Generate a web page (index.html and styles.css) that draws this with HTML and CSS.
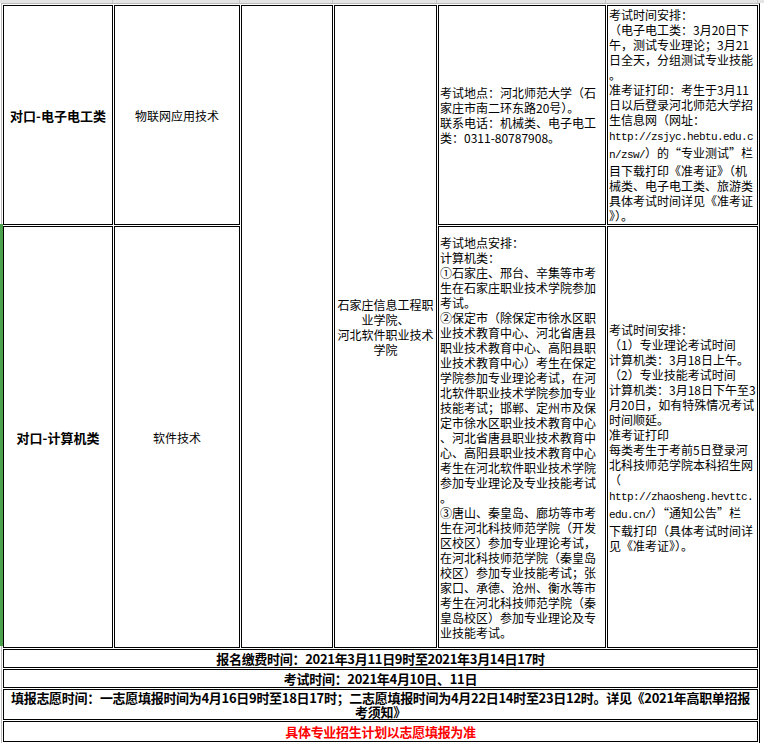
FILE: index.html
```html
<!DOCTYPE html>
<html lang="zh-CN">
<head>
<meta charset="utf-8">
<title>对口招生考试安排</title>
<link rel="stylesheet" href="styles.css">
</head>
<body>
<div class="page">
  <div class="band">
    <span class="b1"></span><span class="b2"></span><span class="b3"></span><span class="b4"></span><span class="b5"></span><span class="b6"></span>
  </div>
  <table class="sheet">
    <colgroup>
      <col class="w1"><col class="w2"><col class="w3"><col class="w4"><col class="w5"><col class="w6">
    </colgroup>
    <tr class="r1">
      <td class="cat">对口-电子电工类</td>
      <td class="major">物联网应用技术</td>
      <td rowspan="2"></td>
      <td rowspan="2" class="school">石家庄信息工程职<br>业学院、<br>河北软件职业技术<br>学院</td>
      <td class="info">考试地点：河北师范大学（石<br>家庄市南二环东路20号）。<br>联系电话：机械类、电子电工<br>类：0311-80787908。</td>
      <td class="info">考试时间安排：<br>（电子电工类：3月20日下<br>午，测试专业理论；3月21<br>日全天，分组测试专业技能<br>。<br>准考证打印：考生于3月11<br>日以后登录河北师范大学招<br>生信息网（网址：<br><span class="url">http://zsjyc.hebtu.edu.c</span><br><span class="url">n/zsw/</span>）的“专业测试”栏<br>目下载打印《准考证》（机<br>械类、电子电工类、旅游类<br>具体考试时间详见《准考证<br>》）。</td>
    </tr>
    <tr class="r2">
      <td class="cat">对口-计算机类</td>
      <td class="major">软件技术</td>
      <td class="info">考试地点安排：<br>计算机类：<br>①石家庄、邢台、辛集等市考<br>生在石家庄职业技术学院参加<br>考试。<br>②保定市（除保定市徐水区职<br>业技术教育中心、河北省唐县<br>职业技术教育中心、高阳县职<br>业技术教育中心）考生在保定<br>学院参加专业理论考试，在河<br>北软件职业技术学院参加专业<br>技能考试；邯郸、定州市及保<br>定市徐水区职业技术教育中心<br>、河北省唐县职业技术教育中<br>心、高阳县职业技术教育中心<br>考生在河北软件职业技术学院<br>参加专业理论及专业技能考试<br>。<br>③唐山、秦皇岛、廊坊等市考<br>生在河北科技师范学院（开发<br>区校区）参加专业理论考试，<br>在河北科技师范学院（秦皇岛<br>校区）参加专业技能考试；张<br>家口、承德、沧州、衡水等市<br>考生在河北科技师范学院（秦<br>皇岛校区）参加专业理论及专<br>业技能考试。</td>
      <td class="info">考试时间安排：<br>（1）专业理论考试时间<br>计算机类：3月18日上午。<br>（2）专业技能考试时间<br>计算机类：3月18日下午至3<br>月20日，如有特殊情况考试<br>时间顺延。<br>准考证打印<br>每类考生于考前5日登录河<br>北科技师范学院本科招生网<br>（<br><span class="url">http://zhaosheng.hevttc.</span><br><span class="url">edu.cn/</span>）“通知公告”栏<br>下载打印（具体考试时间详<br>见《准考证》）。</td>
    </tr>
    <tr class="r3">
      <td colspan="6" class="note">报名缴费时间：2021年3月11日9时至2021年3月14日17时</td>
    </tr>
    <tr class="r4">
      <td colspan="6" class="note">考试时间：2021年4月10日、11日</td>
    </tr>
    <tr class="r5">
      <td colspan="6" class="note">填报志愿时间：一志愿填报时间为4月16日9时至18日17时；二志愿填报时间为4月22日14时至23日12时。详见《2021年高职单招报<br>考须知》</td>
    </tr>
    <tr class="r6">
      <td colspan="6" class="note red">具体专业招生计划以志愿填报为准</td>
    </tr>
  </table>
  <div class="below">
    <span class="b1"></span><span class="b2"></span><span class="b3"></span><span class="b4"></span><span class="b5"></span><span class="b6"></span>
  </div>
  <div class="select-bar"></div>
</div>
</body>
</html>
```

FILE: styles.css
```css
* {
  box-sizing: border-box;
}

html, body {
  margin: 0;
  padding: 0;
  background: #ffffff;
}

body {
  font-family: "Noto Sans CJK SC", "Noto Sans", sans-serif;
  color: #000000;
}

.page {
  position: relative;
  width: 764px;
}

/* grid strips above and below the sheet */
.band,
.below {
  display: flex;
  height: 3px;
}

.band {
  background: #e4e4e4;
}

.below {
  height: 2px;
}

.band span,
.below span {
  flex: none;
  height: 100%;
  border-right: 1px solid #c8c8c8;
}

.b1 { width: 113px; }
.b2 { width: 127px; }
.b3 { width: 93px; }
.b4 { width: 104px; }
.b5 { width: 169px; }
.b6 { width: 152px; }

/* main table */
.sheet {
  width: 759px;
  margin-left: 1px;
  table-layout: fixed;
  border-collapse: separate;
  border-spacing: 1px;
  border: 1px solid #000000;
  border-left-color: #bcbcbc;
  border-top-color: #bcbcbc;
}

.w1 { width: 110px; }
.w2 { width: 126px; }
.w3 { width: 92px; }
.w4 { width: 103px; }
.w5 { width: 168px; }
.w6 { width: 151px; }

.sheet td {
  border: 1px solid #000000;
  padding: 1px;
  font-size: 12px;
  line-height: 15px;
  vertical-align: middle;
  overflow: hidden;
}

.r1 td { height: 218px; }
.r2 td { height: 422px; }
.r3 td { height: 19px; }
.r4 td { height: 19px; }
.r5 td { height: 31px; }
.r6 td { height: 21px; }

.sheet td.cat {
  text-align: center;
  font-size: 13px;
  font-weight: bold;
}

.sheet td.major,
.sheet td.school {
  text-align: center;
}

.sheet td.info {
  text-align: left;
  white-space: nowrap;
}

.url {
  font-family: "Liberation Mono", "DejaVu Sans Mono", monospace;
  font-size: 11px;
  letter-spacing: -0.6px;
}

.sheet td.note {
  padding: 0;
  text-align: center;
  font-size: 13px;
  line-height: 14px;
  font-weight: bold;
  letter-spacing: -0.3px;
  white-space: nowrap;
}

.sheet td.red {
  color: #ff0000;
}

/* green row-selection marker lying over the sheet's left edge */
.select-bar {
  position: absolute;
  left: 0;
  top: 224px;
  width: 3px;
  height: 422px;
  background: #4ca24c;
}
```
